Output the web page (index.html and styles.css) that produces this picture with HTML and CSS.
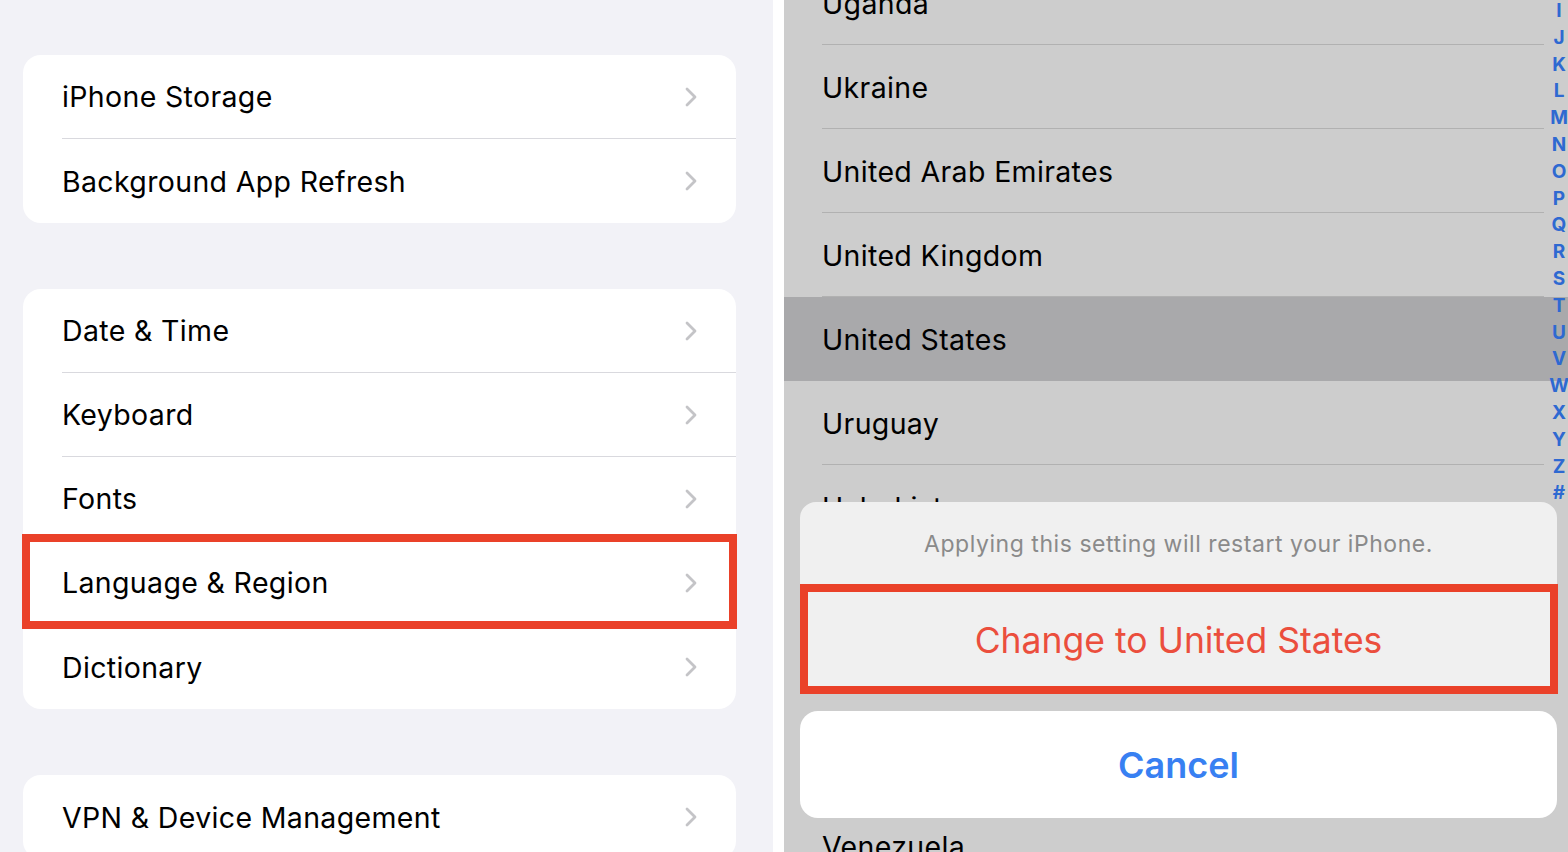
FILE: index.html
```html
<!DOCTYPE html>
<html>
<head>
<meta charset="utf-8">
<link rel="stylesheet" href="styles.css">
</head>
<body>
<div class="screen">
  <section class="left">
    <div class="card">
      <div class="row"><span>iPhone Storage</span><svg class="chev" viewBox="0 0 14 22"><path d="M3 3 L11 11 L3 19"/></svg></div>
      <div class="row"><span>Background App Refresh</span><svg class="chev" viewBox="0 0 14 22"><path d="M3 3 L11 11 L3 19"/></svg></div>
    </div>
    <div class="card">
      <div class="row"><span>Date &amp; Time</span><svg class="chev" viewBox="0 0 14 22"><path d="M3 3 L11 11 L3 19"/></svg></div>
      <div class="row"><span>Keyboard</span><svg class="chev" viewBox="0 0 14 22"><path d="M3 3 L11 11 L3 19"/></svg></div>
      <div class="row"><span>Fonts</span><svg class="chev" viewBox="0 0 14 22"><path d="M3 3 L11 11 L3 19"/></svg></div>
      <div class="row"><span>Language &amp; Region</span><svg class="chev" viewBox="0 0 14 22"><path d="M3 3 L11 11 L3 19"/></svg></div>
      <div class="row"><span>Dictionary</span><svg class="chev" viewBox="0 0 14 22"><path d="M3 3 L11 11 L3 19"/></svg></div>
    </div>
    <div class="card">
      <div class="row"><span>VPN &amp; Device Management</span><svg class="chev" viewBox="0 0 14 22"><path d="M3 3 L11 11 L3 19"/></svg></div>
    </div>
    <div class="hl hl-left"></div>
  </section>
  <div class="gutter"></div>
  <section class="right">
    <div class="list">
      <div class="item"><span>Uganda</span></div>
      <div class="item"><span>Ukraine</span></div>
      <div class="item"><span>United Arab Emirates</span></div>
      <div class="item"><span>United Kingdom</span></div>
      <div class="item selected"><span>United States</span></div>
      <div class="item"><span>Uruguay</span></div>
      <div class="item"><span>Uzbekistan</span></div>
      <div class="item"><span>Vanuatu</span></div>
      <div class="item"><span>Vatican City</span></div>
      <div class="spacer"></div>
      <div class="item"><span>Venezuela</span></div>
    </div>
    <div class="index">
      <span>I</span><span>J</span><span>K</span><span>L</span><span>M</span><span>N</span><span>O</span><span>P</span><span>Q</span><span>R</span><span>S</span><span>T</span><span>U</span><span>V</span><span>W</span><span>X</span><span>Y</span><span>Z</span><span>#</span>
    </div>
    <div class="sheet">
      <div class="group">
        <div class="msg">Applying this setting will restart your iPhone.</div>
        <div class="action">Change to United States</div>
      </div>
      <div class="cancel">Cancel</div>
    </div>
    <div class="hl hl-right"></div>
  </section>
</div>
</body>
</html>
```

FILE: styles.css
```css
* { box-sizing: border-box; }
html, body { margin: 0; padding: 0; }
body {
  width: 1568px;
  height: 852px;
  overflow: hidden;
  font-family: Inter, "Liberation Sans", sans-serif;
  color: #000;
}
.screen {
  display: flex;
  width: 1568px;
  height: 852px;
  overflow: hidden;
  position: relative;
}
.left {
  position: relative;
  width: 773px;
  flex: none;
  background: #f2f2f7;
  padding: 55px 37px 0 23px;
  display: flex;
  flex-direction: column;
  gap: 66px;
}
.gutter {
  width: 11px;
  flex: none;
  background: #ffffff;
}
.card {
  background: #fff;
  border-radius: 18px;
  padding-left: 39px;
  flex: none;
}
.row {
  height: 84px;
  display: flex;
  align-items: center;
  justify-content: space-between;
  padding-right: 38px;
  font-size: 28.5px;
  letter-spacing: 0.35px;
  border-bottom: 1px solid #d9d9de;
}
.row:last-child { border-bottom: none; }
.chev {
  width: 14px;
  height: 22px;
  fill: none;
  stroke: #c4c4c7;
  stroke-width: 2.8;
  stroke-linecap: round;
  stroke-linejoin: round;
}
.hl {
  position: absolute;
  border: 8px solid #ea4129;
  pointer-events: none;
}
.hl-left {
  left: 22px;
  top: 534px;
  width: 715px;
  height: 95px;
}
.right {
  position: relative;
  flex: 1;
  background: #cdcdcd;
  overflow: hidden;
}
.list {
  margin-top: -39px;
}
.item {
  height: 84px;
  display: flex;
  align-items: center;
  padding-left: 38px;
  font-size: 28.5px;
  letter-spacing: 0.35px;
  position: relative;
}
.item::after {
  content: "";
  position: absolute;
  left: 38px;
  right: 24px;
  bottom: 0;
  height: 1px;
  background: #b1b1b1;
}
.item.selected {
  background: #a9a9ab;
}
.item.selected::after { display: none; }
.spacer { height: 87px; }
.index {
  position: absolute;
  right: -3px;
  top: -2px;
  width: 24px;
  display: flex;
  flex-direction: column;
  align-items: center;
  color: #2e69d1;
  font-size: 19px;
  font-weight: 700;
  line-height: 26.8px;
}
.sheet {
  position: absolute;
  left: 16px;
  top: 502px;
  width: 757px;
  display: flex;
  flex-direction: column;
  gap: 20px;
}
.group {
  background: #f0f0f0;
  border-radius: 16px;
  overflow: hidden;
}
.msg {
  height: 83px;
  display: flex;
  align-items: center;
  justify-content: center;
  font-size: 23px;
  color: #8a8a8a;
  letter-spacing: 0.55px;
}
.action {
  height: 106px;
  padding-top: 5px;
  display: flex;
  align-items: center;
  justify-content: center;
  font-size: 35.5px;
  color: #eb4e3d;
}
.cancel {
  height: 107px;
  background: #fff;
  border-radius: 18px;
  display: flex;
  align-items: center;
  justify-content: center;
  font-size: 36px;
  font-weight: 600;
  color: #3880f2;
}
.hl-right {
  left: 16px;
  top: 584px;
  width: 758px;
  height: 110px;
}
```
